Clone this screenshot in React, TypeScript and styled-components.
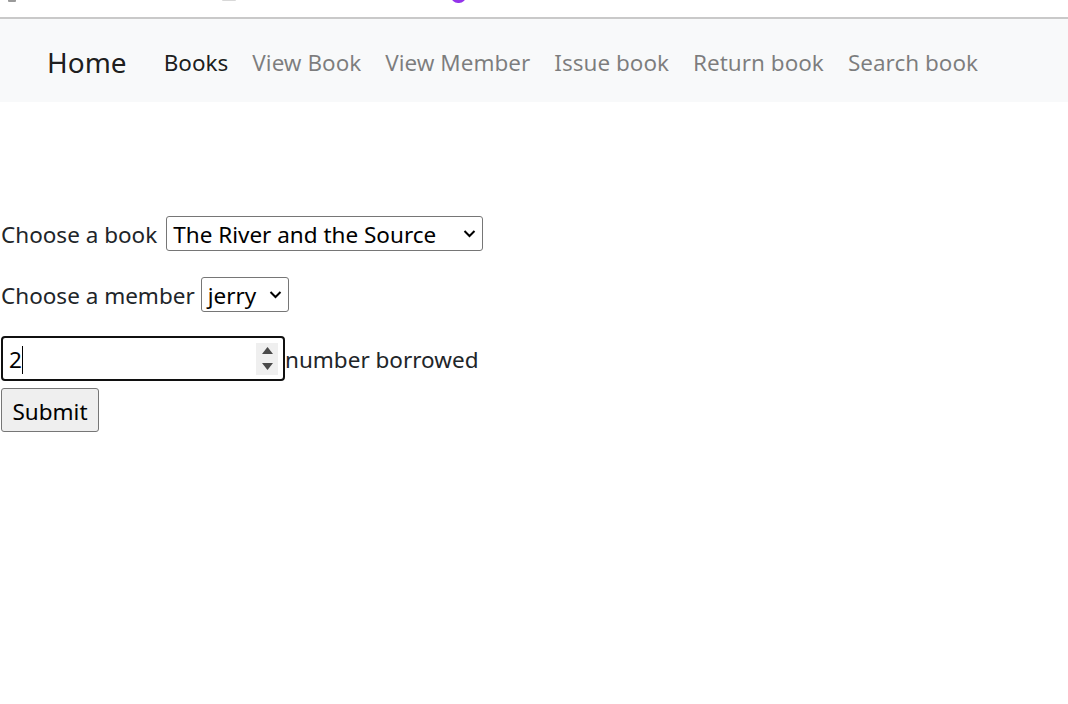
import React from "react";
import styled, { createGlobalStyle } from "styled-components";

const Global = createGlobalStyle`
  html, body { margin: 0; padding: 0; background: #fff; }
  body { font-family: "Noto Sans", "Open Sans", sans-serif; color: #212529; }
`;

const Page = styled.div`
  width: 1068px;
  height: 704px;
  overflow: hidden;
  display: flex;
  flex-direction: column;
`;

const TopStrip = styled.div`
  position: relative;
  height: 17px;
  border-bottom: 2px solid #c9c9c9;
  background: #fff;
`;

const Fragment = styled.span<{ $x: number; $w: number; $c: string; $r?: number; $top?: number; $h?: number }>`
  position: absolute;
  left: ${(p) => p.$x}px;
  top: ${(p) => p.$top ?? -2}px;
  width: ${(p) => p.$w}px;
  height: ${(p) => p.$h ?? 4}px;
  background: ${(p) => p.$c};
  border-radius: ${(p) => p.$r ?? 1}px;
`;

const Nav = styled.nav`
  height: 83px;
  box-sizing: border-box;
  background: #f8f9fa;
  display: flex;
  align-items: center;
  padding: 3px 0 0 47px;
`;

const Brand = styled.a`
  font-size: 28px;
  color: rgba(0, 0, 0, 0.9);
  margin-right: 37px;
  text-decoration: none;
`;

const Links = styled.div`
  display: flex;
  gap: 24px;
`;

const NavLink = styled.a<{ $active?: boolean }>`
  font-size: 22.5px;
  color: ${(p) => (p.$active ? "rgba(0,0,0,0.9)" : "rgba(0,0,0,0.5)")};
  text-decoration: none;
`;

const Form = styled.form`
  display: flex;
  flex-direction: column;
  align-items: flex-start;
  padding: 114px 0 0 1px;
  font-size: 22.5px;
`;

const Row = styled.div<{ $mt?: number }>`
  display: flex;
  align-items: center;
  margin-top: ${(p) => p.$mt ?? 0}px;
  line-height: 1;
`;

const Text = styled.span<{ $gap?: number; $color?: string }>`
  padding-top: 4px;
  margin-right: ${(p) => p.$gap ?? 0}px;
  color: ${(p) => p.$color ?? "#212529"};
`;

const Select = styled.div<{ $w: number }>`
  width: ${(p) => p.$w}px;
  height: 35px;
  box-sizing: border-box;
  border: 1px solid #767676;
  border-radius: 3px;
  display: flex;
  align-items: center;
  justify-content: space-between;
  padding: 0 6px 0 6px;
  color: #000;
  font-size: 22.5px;
  background: #fff;
`;

const NumberBox = styled.div`
  width: 284px;
  height: 45px;
  box-sizing: border-box;
  border: 2px solid #101010;
  border-radius: 4px;
  display: flex;
  align-items: center;
  padding: 0 5px 0 6px;
  color: #000;
  background: #fff;
`;

const Value = styled.span`
  flex: 1;
  display: flex;
  align-items: center;
  padding-top: 3px;
`;

const Caret = styled.span`
  display: inline-block;
  width: 1px;
  height: 28px;
  background: #000;
`;

const Spinner = styled.div`
  width: 22px;
  height: 32px;
  background: #efefef;
  display: flex;
  flex-direction: column;
  align-items: center;
  justify-content: space-around;
`;

const Button = styled.button`
  margin-top: 7px;
  width: 98px;
  height: 44px;
  box-sizing: border-box;
  background: #efefef;
  border: 1px solid #767676;
  border-radius: 3px;
  font-family: inherit;
  font-size: 22.5px;
  color: #000;
  padding: 3px 0 0;
`;

const Chevron = () => (
  <svg width="13" height="9" viewBox="0 0 13 9">
    <path d="M1.5 2 L6.5 7 L11.5 2" fill="none" stroke="#000" strokeWidth="2" />
  </svg>
);

export default function App() {
  return (
    <Page>
      <Global />
      <TopStrip>
        <Fragment $x={8} $w={8} $c="#9a9a9a" />
        <Fragment $x={222} $w={14} $c="#d8d8d8" $h={3} />
        <Fragment $x={451} $w={15} $c="#9333ea" $r={8} $top={-11} $h={14} />
      </TopStrip>
      <Nav>
        <Brand>Home</Brand>
        <Links>
          <NavLink $active>Books</NavLink>
          <NavLink>View Book</NavLink>
          <NavLink>View Member</NavLink>
          <NavLink>Issue book</NavLink>
          <NavLink>Return book</NavLink>
          <NavLink>Search book</NavLink>
        </Links>
      </Nav>
      <Form onSubmit={(e) => e.preventDefault()}>
        <Row>
          <Text $gap={9}>Choose a book</Text>
          <Select $w={317}>
            <Text $color="#000">The River and the Source</Text>
            <Chevron />
          </Select>
        </Row>
        <Row $mt={26}>
          <Text $gap={6}>Choose a member</Text>
          <Select $w={88}>
            <Text $color="#000">jerry</Text>
            <Chevron />
          </Select>
        </Row>
        <Row $mt={24}>
          <NumberBox>
            <Value>
              2<Caret />
            </Value>
            <Spinner>
              <svg width="11" height="7" viewBox="0 0 11 7">
                <path d="M5.5 0 L11 7 L0 7 Z" fill="#4a4a4a" />
              </svg>
              <svg width="11" height="7" viewBox="0 0 11 7">
                <path d="M0 0 L11 0 L5.5 7 Z" fill="#4a4a4a" />
              </svg>
            </Spinner>
          </NumberBox>
          <Text>number borrowed</Text>
        </Row>
        <Button type="submit">Submit</Button>
      </Form>
    </Page>
  );
}
